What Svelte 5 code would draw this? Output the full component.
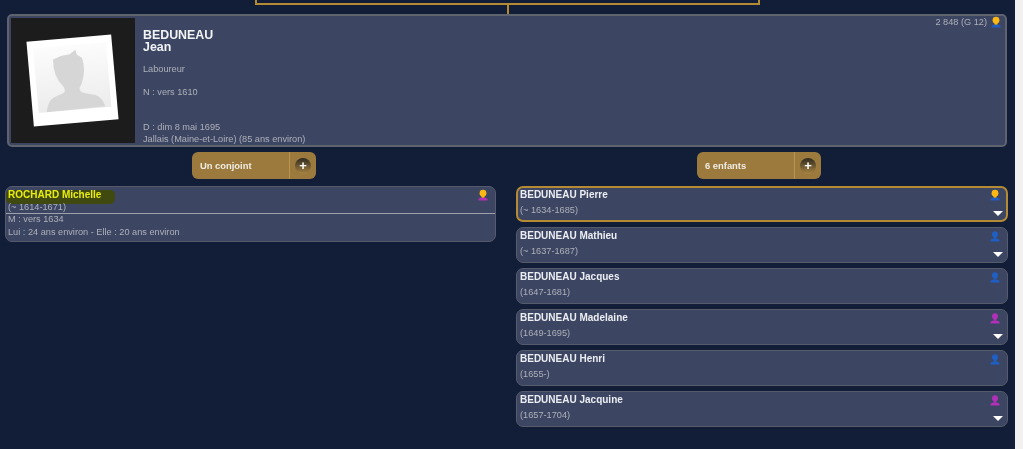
<script lang="ts">
	const children = [
		{ name: 'BEDUNEAU Pierre', dates: '(~ 1634-1685)', sex: 'm', star: true, more: true },
		{ name: 'BEDUNEAU Mathieu', dates: '(~ 1637-1687)', sex: 'm', star: false, more: true },
		{ name: 'BEDUNEAU Jacques', dates: '(1647-1681)', sex: 'm', star: false, more: false },
		{ name: 'BEDUNEAU Madelaine', dates: '(1649-1695)', sex: 'f', star: false, more: true },
		{ name: 'BEDUNEAU Henri', dates: '(1655-)', sex: 'm', star: false, more: false },
		{ name: 'BEDUNEAU Jacquine', dates: '(1657-1704)', sex: 'f', star: false, more: true }
	];
</script>

{#snippet person(sex: string, star: boolean)}
	<svg class="person" width="12" height="12" viewBox="0 0 12 12">
		<path class={sex} d="M1.5 11.5 V10.2 Q1.5 9.2 3 9 L4.5 8.4 H7.5 L9 9 Q10.5 9.2 10.5 10.2 V11.5 Z" />
		<circle class={star ? 'gold' : sex} cx="6" cy="4.2" r={star ? 3.4 : 3} />
		<rect class={star ? 'gold' : sex} x="4.6" y="6" width="2.8" height="2.6" />
	</svg>
{/snippet}

<div class="page">
	<main>
		<div class="connector"></div>
		<div class="stem"></div>

		<section class="main-card">
			<div class="photo">
				<div class="polaroid">
					<div class="shot">
						<svg viewBox="0 0 73 65">
							<path
								d="M8 65 Q10 54 16 51 L27 47 Q29 45 27 41 Q22 35 20 28 Q18 20 19 13 L27 10 L36 9 L42 5 L43 10 L48 14 Q50 24 48 31 Q46 40 43 43 Q42 47 47 49 L58 52 Q64 54 67 64 Z"
							/>
						</svg>
					</div>
				</div>
			</div>
			<div class="details">
				<h1>BEDUNEAU<br />Jean</h1>
				<p class="job">Laboureur</p>
				<p class="birth">N : vers 1610</p>
				<p class="death">D : dim 8 mai 1695<br />Jallais (Maine-et-Loire) (85 ans environ)</p>
			</div>
			<div class="sosa">
				<span>2 848 (G 12)</span>
				{@render person('m', true)}
			</div>
		</section>

		<div class="columns">
			<div class="column">
				<button class="toggle">
					<span class="label">Un conjoint</span>
					<span class="plus-cell"><span class="plus">+</span></span>
				</button>
				<article class="spouse">
					<div class="spouse-head">
						<strong class="hl">ROCHARD Michelle</strong>
						<span class="dates">(~ 1614-1671)</span>
						{@render person('f', true)}
					</div>
					<div class="spouse-body">
						<span>M : vers 1634</span>
						<span>Lui : 24 ans environ - Elle : 20 ans environ</span>
					</div>
				</article>
			</div>

			<div class="column">
				<button class="toggle">
					<span class="label">6 enfants</span>
					<span class="plus-cell"><span class="plus">+</span></span>
				</button>
				<div class="list">
					{#each children as child, i}
						<article class="child" class:current={i === 0}>
							<strong>{child.name}</strong>
							<span class="dates">{child.dates}</span>
							{@render person(child.sex, child.star)}
							{#if child.more}<span class="more"></span>{/if}
						</article>
					{/each}
				</div>
			</div>
		</div>
	</main>
	<div class="scrollbar"></div>
</div>

<style>
	:global(body) {
		background: #121d37;
		overflow: hidden;
	}
	.page {
		display: flex;
		height: 449px;
		font-family: 'Liberation Sans', Arial, sans-serif;
		font-size: 9.2px;
		color: #aeb1ba;
		filter: blur(0.4px);
	}
	main {
		flex: 1;
		min-width: 0;
		background: #121d37;
	}
	.scrollbar {
		width: 8px;
		background: #f1f1f1;
	}
	.connector {
		height: 5px;
		margin: 0 255px;
		border: 2px solid #b58a35;
		border-top: 0;
		box-sizing: border-box;
	}
	.stem {
		width: 2px;
		height: 9px;
		margin-left: 507px;
		background: #b58a35;
	}
	.main-card {
		position: relative;
		display: flex;
		height: 133px;
		width: 1000px;
		margin: 0 0 0 7px;
		box-sizing: border-box;
		padding: 2px;
		background: #3c4562;
		border: 2px solid #5f636e;
		border-radius: 5px;
	}
	.photo {
		width: 124px;
		flex-shrink: 0;
		display: flex;
		align-items: center;
		justify-content: center;
		background: #1c1c1c;
	}
	.polaroid {
		width: 85px;
		height: 85px;
		padding: 7px 6px 13px;
		box-sizing: border-box;
		background: #fff;
		transform: translateX(-1px) rotate(-5deg);
	}
	.shot {
		height: 100%;
		background: linear-gradient(#fcfcfc, #ececec);
	}
	.shot svg {
		display: block;
		width: 100%;
		height: 100%;
	}
	.shot path {
		fill: #d6d6d6;
	}
	.details {
		padding: 11px 0 0 8px;
		display: flex;
		flex-direction: column;
	}
	h1 {
		margin: 0;
		font-size: 12.4px;
		line-height: 12px;
		color: #f2f3f5;
	}
	.details p {
		margin: 0;
		line-height: 12px;
	}
	.details .job {
		margin-top: 10px;
	}
	.details .birth {
		margin-top: 11px;
	}
	.details .death {
		margin-top: 23px;
	}
	.sosa {
		position: absolute;
		top: 0;
		right: 3px;
		display: flex;
		align-items: center;
		gap: 3px;
	}
	.columns {
		display: grid;
		grid-template-columns: 491px 492px;
		gap: 20px;
		padding: 5px 0 0 5px;
	}
	.column {
		display: flex;
		flex-direction: column;
		align-items: center;
	}
	.column:first-child .toggle {
		margin-left: 7px;
	}
	.column:last-child .toggle {
		margin-right: 6px;
	}
	.toggle {
		display: flex;
		width: 124px;
		height: 27px;
		padding: 0;
		background: #9c7a3e;
		border: 0;
		border-radius: 6px;
		font: inherit;
	}
	.label {
		flex: 1;
		padding-left: 8px;
		line-height: 28px;
		font-size: 9.4px;
		text-align: left;
		font-weight: bold;
		color: #f0ece2;
	}
	.plus-cell {
		width: 26px;
		display: flex;
		align-items: center;
		justify-content: center;
		border-left: 1px solid #b8944f;
	}
	.plus {
		width: 16px;
		height: 16px;
		border-radius: 50%;
		background: linear-gradient(#2f2a20, #a98442);
		color: #fff;
		font-size: 13px;
		font-weight: bold;
		line-height: 15px;
		text-align: center;
	}
	.spouse,
	.child {
		position: relative;
		width: 100%;
		box-sizing: border-box;
		background: #3c4562;
		border: 1px solid #565b6b;
		border-radius: 7px;
	}
	.spouse {
		margin-top: 7px;
		height: 56px;
	}
	.spouse-head {
		height: 27px;
		padding: 3px 2px 0;
		box-sizing: border-box;
		display: flex;
		flex-direction: column;
		line-height: 12px;
		border-bottom: 1px solid #9ea1ad;
	}
	.spouse-head .dates {
		position: relative;
	}
	.spouse-body {
		display: flex;
		flex-direction: column;
		margin-top: -1px;
		padding: 0 2px;
		line-height: 13px;
	}
	strong {
		font-size: 10px;
		color: #eceef2;
	}
	.hl {
		box-sizing: border-box;
		width: 109px;
		height: 15px;
		margin: 0 0 -3px -2px;
		padding-left: 2px;
		line-height: 10px;
		color: #e9ec12;
		background: #404a10;
		border-radius: 5px;
	}
	.list {
		width: 100%;
		margin-top: 7px;
		display: flex;
		flex-direction: column;
		gap: 5px;
	}
	.child {
		height: 36px;
		padding: 2px 3px 0;
		display: flex;
		flex-direction: column;
		gap: 3px;
		line-height: 12px;
	}
	.current {
		border: 2px solid #b58a35;
		padding: 1px 2px 0;
	}
	.person {
		position: absolute;
		top: 2px;
		right: 6px;
	}
	.current .person {
		top: 1px;
		right: 5px;
	}
	.sosa .person {
		position: static;
	}
	.person .m {
		fill: #1f5fc4;
	}
	.person .f {
		fill: #b030b8;
	}
	.person .gold {
		fill: #fdb813;
	}
	.more {
		position: absolute;
		right: 4px;
		bottom: 5px;
		border-style: solid;
		border-width: 5px 5px 0;
		border-color: #fff transparent transparent;
	}
	.current .more {
		right: 3px;
		bottom: 4px;
	}
</style>
